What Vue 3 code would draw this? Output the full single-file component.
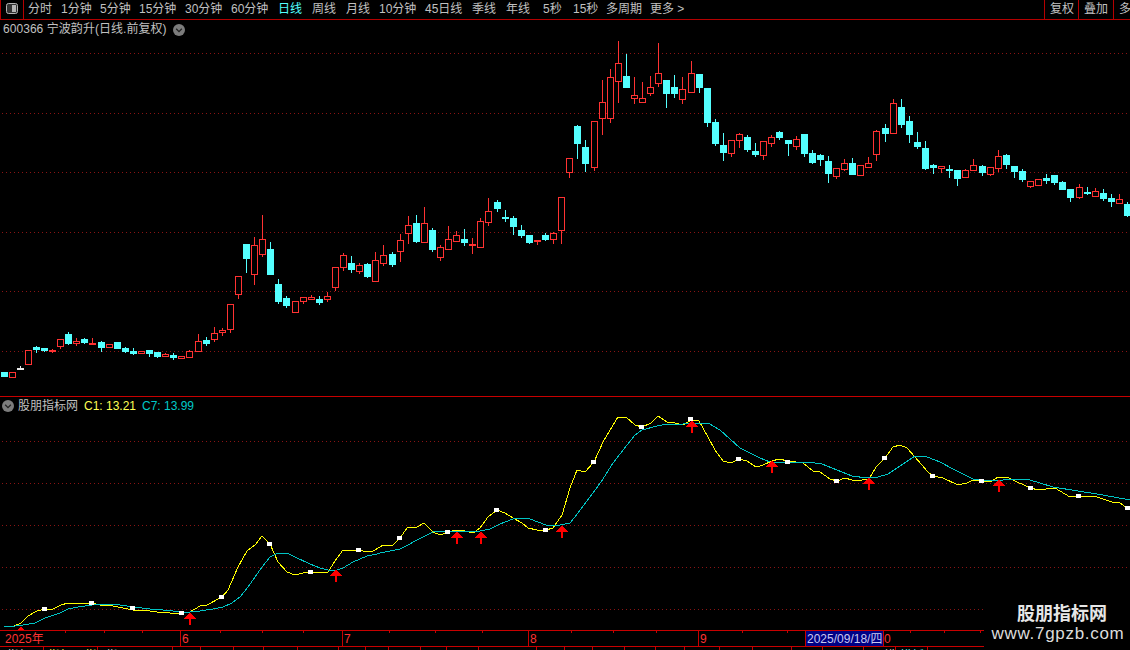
<script setup>
const tabs = [
  { t: '分时', w: 33 }, { t: '1分钟', w: 39 }, { t: '5分钟', w: 39 }, { t: '15分钟', w: 46 },
  { t: '30分钟', w: 46 }, { t: '60分钟', w: 47 }, { t: '日线', w: 34, on: true }, { t: '周线', w: 34 },
  { t: '月线', w: 33 }, { t: '10分钟', w: 46 }, { t: '45日线', w: 47 }, { t: '季线', w: 34 },
  { t: '年线', w: 37 }, { t: '5秒', w: 30 }, { t: '15秒', w: 33 }, { t: '多周期', w: 44 }, { t: '更多 >', w: 40 }
]
const rightTabs = [{ t: '复权', w: 34 }, { t: '叠加', w: 35 }, { t: '多', w: 17 }]

const fromZoom = (y0, rows) => rows.map(r => r.slice(0, 4).map(v => Math.floor(y0 + v / 3)).concat(r[4]))
const rows = [
  ...fromZoom(190, [
    [546,546,558,558,'c'],[547,547,563,563,'r'],[528,534,535,537,'w'],[481,481,524,524,'r'],[468,471,477,486,'c'],
    [474,474,480,483,'c'],[477,480,483,486,'r'],[448,448,470,474,'r'],[426,432,459,462,'c'],[444,454,461,465,'r'],
    [444,449,456,459,'c'],[444,459,461,461,'r'],[453,456,471,483,'c'],[463,463,473,473,'r'],[456,456,474,474,'c'],
    [471,474,483,486,'c'],[474,483,489,492,'c'],[484,484,491,491,'r'],[480,480,489,498,'c'],[486,486,498,501,'c'],
    [489,492,500,500,'r'],[491,495,501,507,'c'],[499,499,506,506,'r'],[480,484,503,503,'r'],[432,454,485,485,'r'],
    [441,450,459,465,'c'],[411,430,449,453,'r'],[414,420,428,435,'r'],[343,343,419,426,'r'],[259,259,314,324,'r'],
    [162,162,204,246,'c'],[141,166,254,282,'r'],[75,148,194,198,'r'],[156,177,252,252,'c'],[267,282,333,339,'c'],
    [318,324,345,351,'c'],[334,334,368,368,'r'],[322,322,335,339,'r'],[316,322,329,329,'r'],[318,327,336,342,'c'],
    [306,319,329,333,'r'],[232,232,293,300,'r'],[189,196,233,240,'r'],[198,219,237,246,'c'],[219,226,245,249,'r'],
    [219,222,258,261,'c'],[186,211,275,275,'r']
  ]),
  ...fromZoom(130, [
    [345,376,401,405,'r'],[366,372,402,408,'c'],[312,331,365,393,'r'],[258,286,311,339,'r'],[255,279,333,336,'c'],
    [231,280,338,338,'r'],[294,300,357,363,'c'],[345,352,383,390,'r'],[288,328,359,359,'r'],[303,316,335,335,'r'],
    [297,327,336,345,'c'],[324,342,347,369,'r'],[264,274,353,353,'r'],[204,244,278,285,'r'],[210,216,234,243,'c'],
    [240,261,264,273,'c'],[258,264,288,312,'c'],[285,300,315,321,'c'],[315,315,336,339,'c'],[330,330,335,342,'r'],
    [309,315,327,330,'c'],[306,310,329,339,'r'],[202,202,302,339,'r'],[85,85,128,141,'r']
  ]),
  [125,126,143,158,'c'],[140,147,163,171,'c'],[121,121,167,170,'r'],[80,102,118,134,'r'],[69,77,118,122,'r'],
  [41,63,81,102,'r'],[54,76,87,87,'c'],[77,95,98,103,'r'],[82,98,102,102,'r'],[76,87,93,95,'r'],[43,73,83,86,'r'],
  [80,80,93,107,'c'],[75,87,93,97,'c'],[77,89,99,103,'r'],[61,73,92,92,'r'],[74,74,87,92,'c'],[88,88,122,126,'c'],
  [119,122,143,145,'c'],[133,145,152,160,'c'],[140,140,153,156,'r'],[133,134,140,147,'r'],[135,137,149,151,'c'],
  [143,151,154,156,'c'],[141,141,155,159,'r'],[135,137,143,146,'r'],[131,132,137,139,'c'],[140,140,143,155,'c'],
  [136,139,146,149,'r'],[134,134,153,156,'c'],[150,153,162,163,'c'],[154,155,159,165,'c'],[156,161,173,182,'c'],
  [168,168,176,178,'r'],[159,163,169,170,'r'],[158,163,174,174,'c'],[165,165,175,175,'r'],[157,163,167,167,'r'],
  [130,131,154,160,'r'],[124,128,133,141,'c'],[99,103,133,133,'r'],[99,107,124,127,'c'],[116,121,134,142,'c'],
  [132,142,146,148,'c'],[141,148,168,169,'c'],[164,165,167,173,'c'],[166,166,168,172,'r'],[165,169,170,177,'c'],
  [170,170,178,185,'c'],[169,170,177,177,'r'],[159,165,170,170,'r'],[165,166,172,175,'c'],[167,167,174,175,'r'],
  [150,156,168,171,'r'],[154,155,164,168,'c'],[166,166,171,177,'c'],[169,171,179,181,'c'],[181,181,186,187,'r'],
  [179,179,185,185,'r'],[174,178,180,183,'c'],[175,175,182,184,'c'],[181,182,189,189,'c'],[189,189,197,201,'c'],
  [184,187,197,198,'r'],[187,192,193,194,'c'],[188,191,196,196,'r'],[189,193,198,200,'c'],[194,198,201,206,'c'],
  [194,199,203,203,'r'],[202,204,215,216,'c']
]
const jumps = [12, 24, 36, 48, 61, 73, 85, 97, 109, 121, 133]
const candles = rows.map((r, i) => ({
  x: 4 + 8 * i + jumps.filter(j => j <= i).length + 0.5,
  hi: r[0], top: r[1], bot: r[2], lo: r[3], kind: r[4]
}))

const toPoints = (x0, y0, list) => {
  const out = []
  for (let i = 0; i < list.length; i += 2) out.push(`${Math.round(x0 + list[i] / 3)},${Math.round(y0 + list[i + 1] / 3)}`)
  return out
}
const yellow = [
  ...toPoints(0, 390, [42,707,62,700,85,677,110,663,134,657,158,657,182,645,205,640,277,640,300,645,340,647,370,655,400,660,430,661,470,667,510,669,545,670,570,665,600,648,620,644,667,621,685,600,715,530,740,483,765,465,787,438,811,462,835,515,860,545,885,556,910,550,934,546,958,549,983,546,1006,512,1030,481,1078,481,1100,487,1120,483]),
  ...toPoints(380, 400, [0,440,10,436,38,436,60,415,82,385,110,381,132,370,160,396,180,406,205,396,230,391,255,394,278,400,300,385,325,350,352,330,375,340,400,353,425,370,445,384,470,391,497,391,520,385,545,345,570,265,592,211,615,216,643,185,670,125,713,52,737,52,765,75,787,81,812,70,835,49,860,66,885,70,910,75,934,60,958,62,985,110,1005,150,1030,183,1054,190,1078,177,1100,184,1128,202]),
  ...toPoints(750, 400, [30,198,40,196,66,182,88,178,115,184,160,190,190,213,210,215,240,238,260,242,285,235,305,240,335,240,357,236,378,200,405,175,430,140,450,136,470,145,495,170,535,217,550,228,580,235,625,254,650,250,670,241,700,244,725,242,745,230,772,230,800,245,842,264,865,269,915,265,960,292,988,288,1040,292,1085,307,1108,307,1132,324,1140,325])
].join(' ')
const teal = [
  ...toPoints(0, 390, [12,709,45,707,70,704,105,698,134,685,180,668,205,658,235,650,277,645,330,643,360,644,400,650,450,656,490,661,545,665,570,667,600,663,640,658,670,650,695,640,720,620,745,590,787,530,811,500,835,490,860,490,885,500,930,522,960,535,985,540,1010,541,1030,535,1060,517,1100,498,1130,491]),
  ...toPoints(380, 400, [0,460,30,452,60,447,85,436,110,420,160,396,205,394,230,394,300,394,330,388,360,373,400,357,425,355,450,358,497,375,525,379,570,368,595,340,640,280,670,238,700,190,740,135,765,105,787,90,830,77,860,72,910,71,934,68,985,68,1020,90,1080,145,1110,160]),
  ...toPoints(750, 400, [30,175,60,186,115,187,170,187,215,193,260,209,305,228,350,233,385,232,415,222,450,197,495,168,530,171,570,185,610,207,670,238,720,242,800,238,840,240,910,260,985,273,1060,285,1140,300])
].join(' ')

const dots = [
  [45,609],[92,603],[133,608],[182,613],[222,597],[270,544],[311,572],[359,550],
  [400,538],[448,532],[497,510],[546,530],[594,462],[642,427],[691,419],[739,459],
  [788,462],[837,481],[885,458],[933,476],[982,481],[1031,488],[1079,496],[1128,508]
]
const arrows = [[21,626],[190,612],[336,569],[457,531],[481,531],[562,525],[692,420],[772,460],[869,477],[999,479]]

const dottedPath = ys => {
  let d = ''
  for (const y of ys) for (let x = 2; x < 1130; x += 4) d += `M${x} ${y}h1v1h-1z`
  return d
}
const mainGrid = dottedPath([53, 113, 172, 232, 291, 351])
const subGrid = dottedPath([441, 483, 525, 567, 609])
const majors = [180, 342, 528, 698]
const ticks = [65,104,142,220,262,303,389,435,482,571,613,656,742,787,910,944,980]
const footSeps = [43,97,172,200,233,263,297,338,365,388,420,446,478,536,564,592,624,655,684,719,752,791,822,863,895,927]
const axisLabels = [['2025年',5],['6',182],['7',344],['8',530],['9',700]]
const footTexts = [['指标',7,'#d8d8d8'],['指标',48,'#ffff54'],['指',85,'#ffff54'],['指',106,'#d8d8d8'],['模',884,'#d8d8d8'],['模板',900,'#54ffff']]
</script>

<template>
  <div class="screen">
    <header class="toolbar">
      <div class="layout-btn">
        <svg width="14" height="14" viewBox="0 0 14 14">
          <rect x="1.5" y="1.5" width="11" height="10" rx="2" fill="#333" stroke="#b4b4b4" />
          <rect x="7" y="3" width="4" height="7" fill="#b4b4b4" />
        </svg>
      </div>
      <span v-for="tab in tabs" :key="tab.t" class="tab" :class="{ on: tab.on }" :style="{ width: tab.w + 'px' }">{{ tab.t }}</span>
      <div class="right-tabs">
        <span v-for="tab in rightTabs" :key="tab.t" class="rtab" :style="{ width: tab.w + 'px' }">{{ tab.t }}</span>
      </div>
    </header>

    <section class="main-pane">
      <div class="stock-title">
        <span>600366 宁波韵升(日线.前复权)</span>
        <svg class="round" width="12" height="12" viewBox="0 0 12 12">
          <circle cx="6" cy="6" r="6" fill="#7c7c7c" />
          <path d="M3.2 4.8 6 7.6 8.8 4.8" fill="none" stroke="#222" stroke-width="1.3" />
        </svg>
      </div>
      <svg class="plot" width="1130" height="376" viewBox="0 20 1130 376" shape-rendering="crispEdges">
        <path :d="mainGrid" fill="#8a1414" />
        <g v-for="c in candles" :key="c.x" :class="'k-' + c.kind">
          <line :x1="c.x" :x2="c.x" :y1="c.hi" :y2="c.lo + 1" class="wick" />
          <rect :x="c.x - 3" :y="c.top + 0.5" width="6" :height="Math.max(c.bot - c.top, 1)" class="body" />
        </g>
      </svg>
    </section>

    <section class="sub-pane">
      <div class="legend">
        <svg width="12" height="12" viewBox="0 0 12 12">
          <circle cx="6" cy="6" r="6" fill="#7c7c7c" />
          <path d="M3.2 4.8 6 7.6 8.8 4.8" fill="none" stroke="#222" stroke-width="1.3" />
        </svg>
        <span class="legend-name">股朋指标网</span>
        <span class="legend-c1">C1: 13.21</span>
        <span class="legend-c7">C7: 13.99</span>
      </div>
      <svg class="plot" width="1130" height="233" viewBox="0 397 1130 233" shape-rendering="crispEdges">
        <path :d="subGrid" fill="#8a1414" />
        <polyline :points="yellow" class="line-y" />
        <polyline :points="teal" class="line-t" />
        <rect v-for="d in dots" :key="d[0]" :x="d[0] - 3" :y="d[1] - 2" width="5" height="4" fill="#ffffff" />
        <g v-for="a in arrows" :key="a[0]" fill="#ff0000">
          <polygon :points="`${a[0]},${a[1]} ${a[0] + 6},${a[1] + 7} ${a[0] - 6},${a[1] + 7}`" />
          <rect :x="a[0] - 1" :y="a[1] + 6" width="2" height="7" />
        </g>
      </svg>
    </section>

    <svg class="axis" width="1130" height="20" viewBox="0 630 1130 20">
      <g shape-rendering="crispEdges">
        <rect x="0" y="630" width="1130" height="1" fill="#c80000" />
        <rect x="0" y="646" width="1130" height="1" fill="#c80000" />
        <rect v-for="x in majors" :key="x" :x="x" y="630" width="1" height="16" fill="#c80000" />
        <rect v-for="x in ticks" :key="x" :x="x" y="631" width="1" height="2" fill="#c80000" />
        <rect v-for="x in footSeps" :key="x" :x="x" y="647" width="1" height="3" fill="#c80000" />
        <rect x="805.5" y="630.5" width="78" height="16" fill="#000084" stroke="#c80000" />
      </g>
      <text v-for="l in axisLabels" :key="l[0]" :x="l[1]" y="643" class="axis-label">{{ l[0] }}</text>
      <text x="807" y="643" class="date-label">2025/09/18/四</text>
      <text x="884" y="643" class="axis-label">0</text>
      <text v-for="f in footTexts" :key="f[1]" :x="f[1]" y="660" class="foot-label" :fill="f[2]">{{ f[0] }}</text>
    </svg>

    <div class="watermark">
      <div class="wm-name">股朋指标网</div>
      <div class="wm-url">www.7gpzb.com</div>
    </div>
  </div>
</template>

<style scoped>
.screen {
  position: relative;
  width: 1130px;
  height: 650px;
  overflow: hidden;
  background: #000;
  font-family: "Liberation Sans", "Noto Sans CJK SC", sans-serif;
  font-size: 12px;
  color: #c0c0c0;
}
.toolbar {
  display: flex;
  height: 19px;
  border-bottom: 1px solid #b40000;
  line-height: 19px;
}
.layout-btn {
  box-sizing: border-box;
  width: 24px;
  height: 19px;
  padding: 2px 0 0 4px;
  border-left: 1px solid #b40000;
  border-right: 1px solid #b40000;
  margin-right: 4px;
  flex: none;
}
.layout-btn svg { display: block; }
.tab { flex: none; white-space: nowrap; }
.tab.on { color: #54ffff; }
.right-tabs { display: flex; margin-left: auto; flex: none; }
.rtab {
  box-sizing: border-box;
  flex: none;
  padding-left: 5px;
  border-left: 1px solid #b40000;
  white-space: nowrap;
}
.main-pane {
  position: relative;
  height: 376px;
  border-bottom: 1px solid #c80000;
}
.stock-title {
  position: absolute;
  left: 3px;
  top: 0;
  height: 19px;
  display: flex;
  align-items: center;
  gap: 6px;
  line-height: 19px;
  letter-spacing: 0.05px;
}
.plot { display: block; }
.wick { stroke-width: 1; }
.k-r .wick, .k-r .body { stroke: #ff3232; }
.k-r .body { fill: #000; }
.k-c .wick, .k-c .body { stroke: #54ffff; }
.k-c .body { fill: #54ffff; }
.k-w .wick, .k-w .body { stroke: #e8e8e8; }
.k-w .body { fill: #e8e8e8; }
.sub-pane { position: relative; height: 233px; }
.legend {
  position: absolute;
  left: 2px;
  top: 0;
  height: 18px;
  display: flex;
  align-items: center;
  line-height: 18px;
}
.legend-name { margin-left: 4px; width: 66px; }
.legend-c1 { color: #ffff54; width: 58px; }
.legend-c7 { color: #00c8c8; }
.line-y { fill: none; stroke: #ffff00; stroke-width: 1; }
.line-t { fill: none; stroke: #00c4c4; stroke-width: 1; }
.axis { display: block; }
.axis-label { fill: #ff3232; font-size: 12px; }
.date-label { fill: #c8c8f0; font-size: 12px; }
.foot-label { font-size: 12px; }
.watermark {
  position: absolute;
  left: 984px;
  top: 601px;
  width: 146px;
  height: 49px;
  background: #000;
  text-align: center;
  color: #dcdcdc;
}
.wm-name {
  margin-left: 10px;
  height: 24px;
  font-size: 18px;
  line-height: 27px;
  font-weight: 700;
  color: #e6e6e6;
}
.wm-url {
  padding-left: 2px;
  font-size: 17px;
  line-height: 18px;
  letter-spacing: 0.7px;
  white-space: nowrap;
}
</style>
